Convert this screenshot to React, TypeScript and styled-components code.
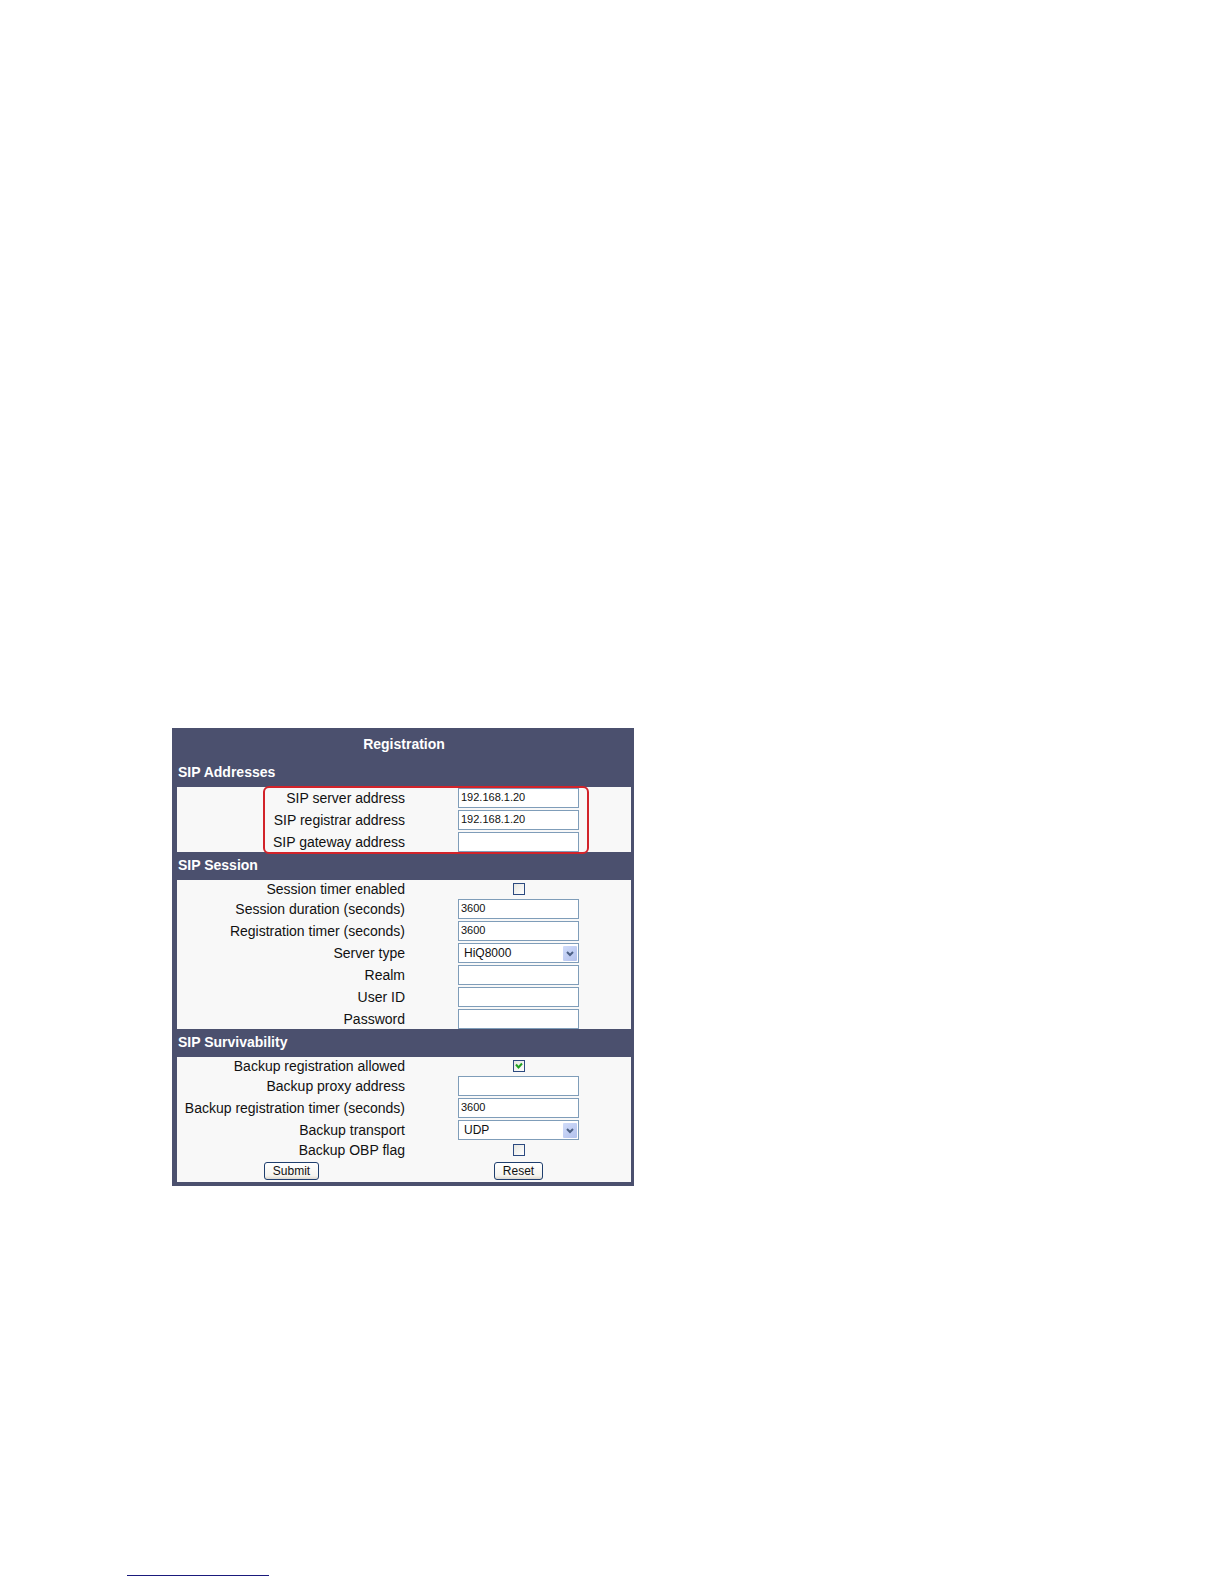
import React from 'react';
import styled, { createGlobalStyle } from 'styled-components';

const App = () => {
  return (
    <Page>
      <GlobalStyle />
      <Panel>
        <Title>Registration</Title>

        <SectionTitle>SIP Addresses</SectionTitle>
        <Section>
          <TextRow id="sip-server" label="SIP server address" value="192.168.1.20" />
          <TextRow id="sip-registrar" label="SIP registrar address" value="192.168.1.20" />
          <TextRow id="sip-gateway" label="SIP gateway address" />
          <Highlight />
        </Section>

        <SectionTitle>SIP Session</SectionTitle>
        <Section>
          <CheckRow id="session-timer" label="Session timer enabled" />
          <TextRow id="session-duration" label="Session duration (seconds)" value="3600" />
          <TextRow id="registration-timer" label="Registration timer (seconds)" value="3600" />
          <SelectRow id="server-type" label="Server type" value="HiQ8000" />
          <TextRow id="realm" label="Realm" />
          <TextRow id="user-id" label="User ID" />
          <TextRow id="password" label="Password" type="password" />
        </Section>

        <SectionTitle>SIP Survivability</SectionTitle>
        <Section>
          <CheckRow id="backup-allowed" label="Backup registration allowed" checked />
          <TextRow id="backup-proxy" label="Backup proxy address" />
          <TextRow id="backup-timer" label="Backup registration timer (seconds)" value="3600" />
          <SelectRow id="backup-transport" label="Backup transport" value="UDP" />
          <CheckRow id="backup-obp" label="Backup OBP flag" />
          <ButtonRow>
            <Button type="submit">Submit</Button>
            <Button type="reset">Reset</Button>
          </ButtonRow>
        </Section>
      </Panel>
      <FootRule />
    </Page>
  );
};

type RowProps = {
  id: string;
  label: string;
  value?: string;
  type?: string;
};

const TextRow = ({ id, label, value = '', type = 'text' }: RowProps) => (
  <Row>
    <Label htmlFor={id}>{label}</Label>
    <TextInput id={id} type={type} defaultValue={value} />
  </Row>
);

const SelectRow = ({ id, label, value }: RowProps) => (
  <Row>
    <Label htmlFor={id}>{label}</Label>
    <SelectBox>
      <Select id={id} defaultValue={value}>
        <option>{value}</option>
      </Select>
      <Arrow>
        <svg width="8" height="6" viewBox="0 0 8 6">
          <path d="M1 1L4 4L7 1" fill="none" stroke="#4d6185" strokeWidth="2" />
        </svg>
      </Arrow>
    </SelectBox>
  </Row>
);

const CheckRow = ({ id, label, checked }: { id: string; label: string; checked?: boolean }) => (
  <Row $short>
    <Label htmlFor={id}>{label}</Label>
    <CheckBox>
      <Check id={id} type="checkbox" defaultChecked={checked} />
      <Tick viewBox="0 0 8 8">
        <path d="M1 2.5L3.5 5.5L7 1.5" fill="none" stroke="#21a121" strokeWidth="2" />
      </Tick>
    </CheckBox>
  </Row>
);

const GlobalStyle = createGlobalStyle`
  body {
    margin: 0;
    background: #ffffff;
    font-family: 'Liberation Sans', Arial, sans-serif;
  }

  * {
    box-sizing: border-box;
  }
`;

const Page = styled.main`
  display: flex;
  flex-direction: column;
  min-height: 100vh;
  padding: 728px 127px 8px;
`;

const Panel = styled.form`
  width: 100%;
  max-width: 462px;
  margin-left: 45px;
  padding: 0 3px 4px 5px;
  background: #4b506e;
`;

const Title = styled.h1`
  margin: 0;
  padding-top: 2px;
  color: #ffffff;
  font-size: 14px;
  line-height: 29px;
  text-align: center;
`;

const SectionTitle = styled.h2`
  margin: 0;
  padding: 0 1px 2px;
  color: #ffffff;
  font-size: 14px;
  line-height: 26px;
`;

const Section = styled.section`
  position: relative;
  display: flex;
  flex-direction: column;
  gap: 2px;
  padding-top: 1px;
  background: #f8f8f8;
`;

const Row = styled.div<{ $short?: boolean }>`
  display: grid;
  grid-template-columns: 229fr 225fr;
  align-items: center;
  justify-items: center;
  height: ${({ $short }) => ($short ? '16px' : '20px')};
`;

const Label = styled.label`
  justify-self: end;
  padding-right: 1px;
  color: #111111;
  font-size: 14px;
  line-height: 16px;
  white-space: nowrap;
`;

const TextInput = styled.input`
  width: 121px;
  height: 20px;
  padding: 0 2px 2px;
  border: 1px solid #7f9db9;
  border-radius: 0;
  background: #ffffff;
  color: #111111;
  font-family: inherit;
  font-size: 11px;
`;

const SelectBox = styled.div`
  position: relative;
  width: 121px;
  height: 20px;
`;

const Select = styled.select`
  appearance: none;
  width: 100%;
  height: 100%;
  padding: 0 18px 0 5px;
  border: 1px solid #7f9db9;
  border-radius: 0;
  background: #ffffff;
  color: #111111;
  font-family: inherit;
  font-size: 12px;
`;

const Arrow = styled.span`
  position: absolute;
  top: 3px;
  right: 2px;
  display: flex;
  align-items: center;
  justify-content: center;
  width: 14px;
  height: 15px;
  border-radius: 1px;
  background: linear-gradient(135deg, #d0dcfa, #b3c1ec);
  pointer-events: none;
`;

const CheckBox = styled.span`
  position: relative;
  display: flex;
`;

const Check = styled.input`
  appearance: none;
  width: 12px;
  height: 12px;
  margin: 0;
  border: 1px solid #2c4a80;
  background: linear-gradient(135deg, #e6e6e2, #ffffff);
`;

const Tick = styled.svg`
  position: absolute;
  top: 2px;
  left: 2px;
  width: 8px;
  height: 8px;
  visibility: hidden;
  pointer-events: none;

  ${Check}:checked + & {
    visibility: visible;
  }
`;

const ButtonRow = styled(Row)`
  height: 22px;
  padding: 2px 0;
`;

const Button = styled.button`
  height: 18px;
  padding: 0 8px;
  border: 1px solid #1f3f6e;
  border-radius: 3px;
  background: linear-gradient(#ffffff, #f4f3ee 80%, #dcd8cf);
  color: #111111;
  font-family: inherit;
  font-size: 12px;
  line-height: 16px;
`;

/* red frame around the address fields */
const Highlight = styled.div`
  position: absolute;
  top: -1px;
  right: 42px;
  bottom: -2px;
  left: 86px;
  border: 2px solid #d2232a;
  border-radius: 6px;
  pointer-events: none;
`;

const FootRule = styled.hr`
  width: 142px;
  height: 1px;
  margin: auto 0 0;
  border: 0;
  background: #1a1a7c;
`;

export default App;
